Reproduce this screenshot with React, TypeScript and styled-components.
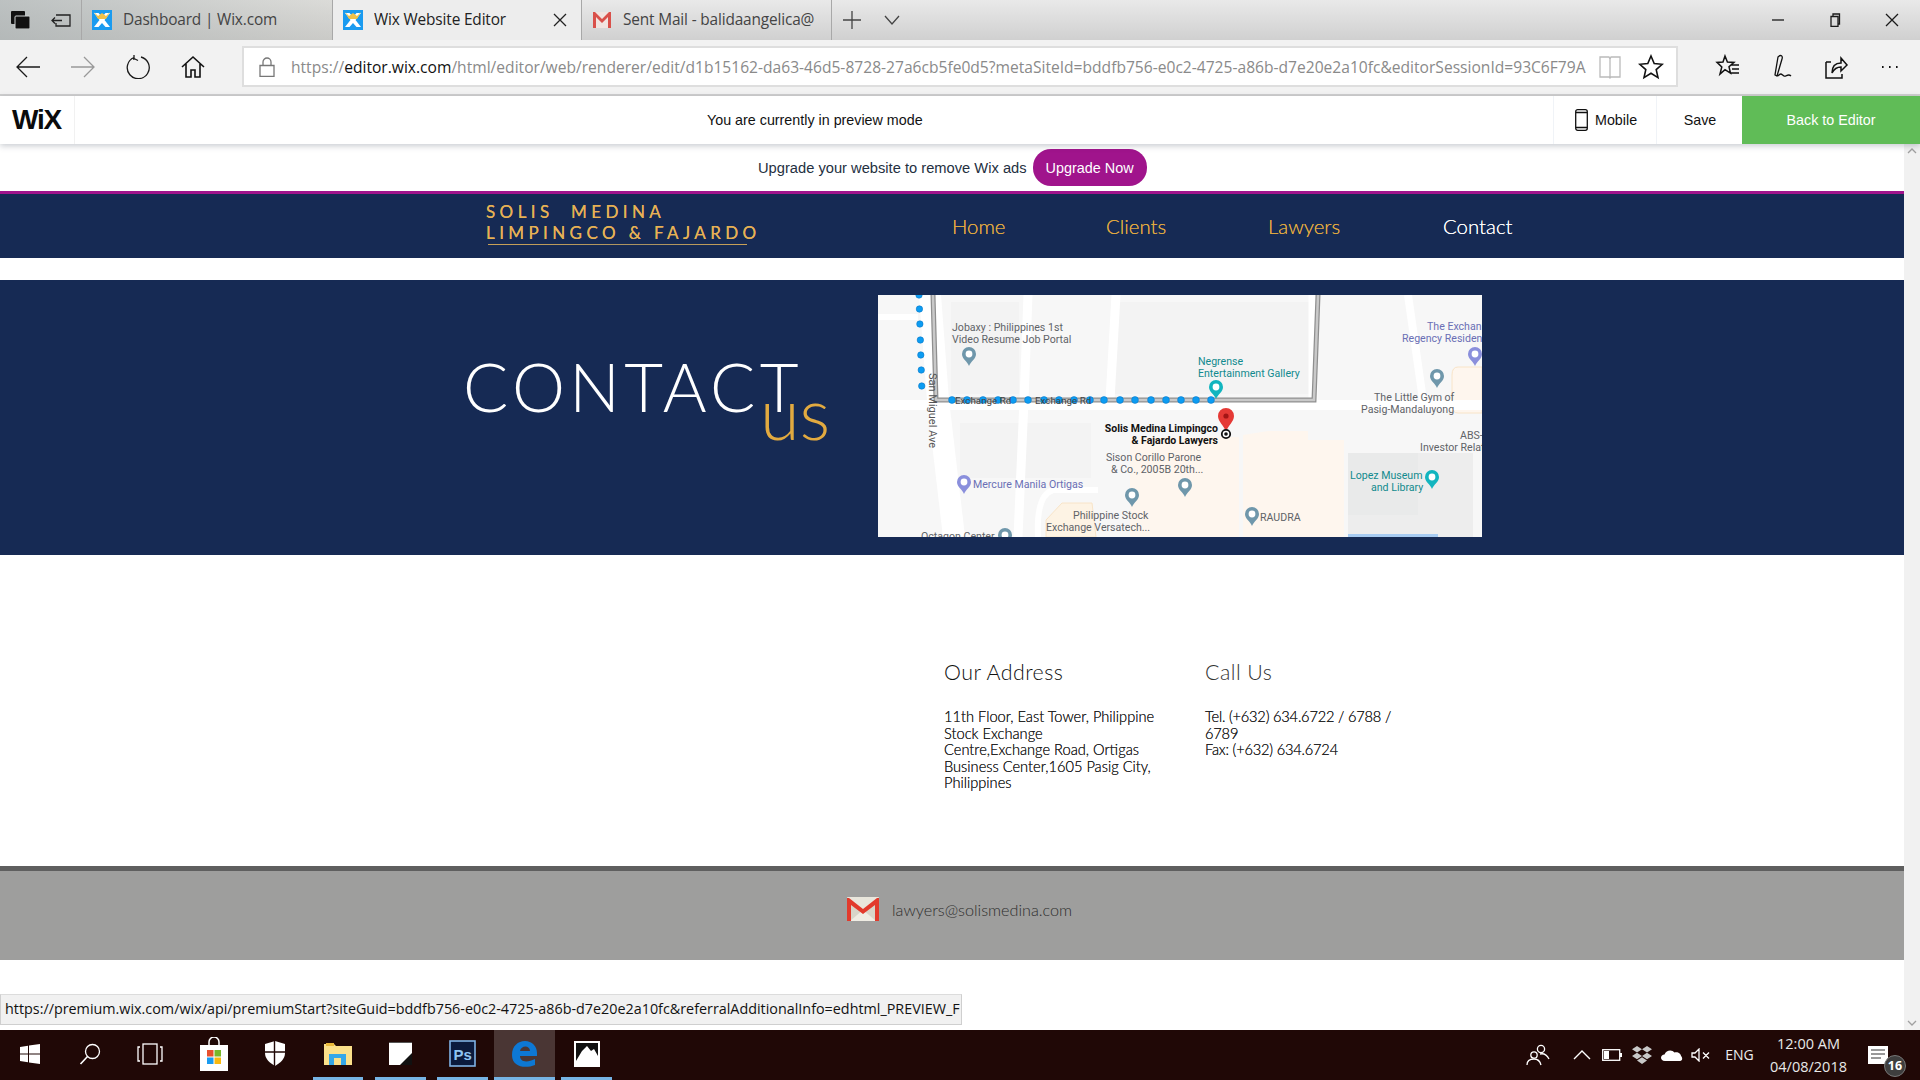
import React from "react";
import styled, { createGlobalStyle } from "styled-components";

const Global = createGlobalStyle`
  html, body { margin: 0; padding: 0; width: 1920px; height: 1080px; overflow: hidden; background: #fff; }
  * { box-sizing: border-box; }
  #root { width: 1920px; height: 1080px; }
`;

const UI = `"Open Sans", "Liberation Sans", sans-serif`;
const HELV = `"Liberation Sans", Arial, sans-serif`;
const DISPLAY = `Lato, "Open Sans", sans-serif`;
const NAVY = "#162a54";
const GOLD = "#e2aa40";
const PURPLE = "#a0148c";

const Screen = styled.div`
  width: 1920px; height: 1080px; display: flex; flex-direction: column; position: relative; overflow: hidden;
`;
const TabBar = styled.div`
  height: 40px; display: flex; flex: none;
  background: linear-gradient(90deg, rgba(165,172,172,.65) 0, rgba(190,190,180,.3) 340px, rgba(220,220,220,0) 560px),
    linear-gradient(180deg, #e9e9e9, #d0d0d0);
`;
const Cell = styled.div<{ $w: number }>`
  width: ${(p) => p.$w}px; flex: none; display: flex; align-items: center; justify-content: center;
`;
const Tab = styled.div<{ $w: number; $active?: boolean; $end?: boolean }>`
  width: ${(p) => p.$w}px; flex: none; display: flex; align-items: center; gap: 11px; padding-left: 10px; padding-bottom: 1px;
  font: 15.4px/20px ${UI}; letter-spacing: -0.15px; white-space: nowrap; overflow: hidden;
  color: ${(p) => (p.$active ? "#222" : "#444")};
  background: ${(p) => (p.$active ? "#ededed" : "transparent")};
  border-left: 1px solid #a8a8a8;
  border-right: ${(p) => (p.$end ? "1px solid #a8a8a8" : "0")};
`;
const TabLabel = styled.span`flex: 1; overflow: hidden;`;
const TabClose = styled.span`width: 42px; display: flex; justify-content: center; flex: none;`;
const Spacer = styled.div`flex: 1;`;

const Toolbar = styled.div`
  height: 56px; flex: none; display: flex; align-items: center; background: #f2f2f2; border-bottom: 2px solid #cfcfcf;
`;
const AddressBox = styled.div`
  width: 1436px; height: 41px; margin-left: 22px; flex: none; display: flex; align-items: center;
  background: #fff; border: 2px solid #dedede; margin-top: -1px;
`;
const LockCell = styled.div`width: 47px; flex: none; display: flex; justify-content: center; padding-right: 2px;`;
const Url = styled.div`
  width: 1299px; flex: none; font: 15.6px/20px ${UI}; color: #8a8a8a; white-space: nowrap; overflow: hidden; padding-top: 1px;
  b { font-weight: 400; color: #111; }
`;
const ToolSet = styled.div`display: flex; margin-left: 23px;`;

const WixBar = styled.div`
  height: 48px; flex: none; display: flex; align-items: center; background: #fff; position: relative; z-index: 2;
  box-shadow: 0 2px 6px rgba(40, 50, 70, 0.25); font: 14.3px/18px ${HELV}; color: #111;
`;
const WixLogoCell = styled.div`
  width: 75px; height: 100%; flex: none; border-right: 1px solid #f1f1f1; display: flex; align-items: center; padding-left: 12px;
  font: 700 28px/28px ${HELV}; letter-spacing: -1.2px; color: #0b0b0b;
`;
const PreviewNote = styled.div`margin-left: 632px; width: 846px;`;
const MobileBtn = styled.div`
  width: 104px; height: 100%; display: flex; align-items: center; gap: 7px; padding-left: 21px; border-left: 1px solid #f0f3f7; border-right: 1px solid #f0f3f7;
`;
const SaveBtn = styled.div`width: 85px; display: flex; justify-content: center; padding-left: 1px;`;
const BackBtn = styled.div`
  flex: 1; height: 100%; background: #60bc57; color: #fff; display: flex; align-items: center; justify-content: center;
`;

const BodyRow = styled.div`flex: 1; display: flex; min-height: 0;`;
const Page = styled.div`width: 1904px; flex: none; background: #fff; overflow: hidden;`;
const ScrollBar = styled.div`
  width: 16px; flex: none; background: #f1f1f1; color: #a0a0a0; display: flex; flex-direction: column; justify-content: space-between; align-items: center; padding: 4px 0;
`;

const UpgradeRow = styled.div`
  height: 47px; display: flex; align-items: center; padding-left: 758px; gap: 6px; font: 14.7px/18px ${HELV}; color: #24303f;
`;
const UpgradeBtn = styled.div`
  width: 114px; height: 37px; border-radius: 18px; background: ${PURPLE}; color: #fff; font-size: 14.4px;
  display: flex; align-items: center; justify-content: center;
`;
const NavBand = styled.div`
  height: 67px; border-top: 3px solid ${PURPLE}; background: ${NAVY}; display: flex; padding-left: 486px;
`;
const Logo = styled.div`
  width: 466px; flex: none; padding-top: 8px; font: 400 17px/20.5px ${DISPLAY}; color: #e6b154; letter-spacing: 4.4px; white-space: pre;
  text-shadow: 0 0 0.5px currentColor;
`;
const LogoRule = styled.div`
  width: 259px; height: 1px; margin: 1px 0 0 2px; background: linear-gradient(90deg, #c9a156, #a99262 60%, #c9a156);
`;
const NavList = styled.div`
  display: grid; grid-template-columns: 154px 162px 175px auto; align-items: center; height: 64px;
`;
const NavItem = styled.div<{ $on?: boolean }>`
  font: 300 20.4px/24px ${DISPLAY}; color: ${(p) => (p.$on ? "#fff" : GOLD)}; text-shadow: 0 0 0.5px currentColor;
`;
const WhiteGap = styled.div`height: 22px;`;
const Hero = styled.div`
  height: 275px; background: ${NAVY}; display: flex; padding-left: 463px;
`;
const TitleBox = styled.div`
  width: 415px; flex: none; display: flex; align-items: baseline; padding-top: 73px; height: 200px;
`;
const TitleMain = styled.div`
  font: 300 67px/66px ${DISPLAY}; color: #fff; letter-spacing: 4.4px;
`;
const TitleUs = styled.div`
  font: 300 72px/62px ${DISPLAY}; color: ${GOLD}; margin-left: -43px; position: relative; top: 28px;
`;
const MapFrame = styled.div`
  width: 604px; height: 242px; margin-top: 15px; flex: none; background: #f5f5f5;
  svg { display: block; }
`;
const Info = styled.div`
  height: 311px; padding: 105px 0 0 944px; display: flex;
`;
const InfoCol = styled.div<{ $w: number }>`width: ${(p) => p.$w}px; flex: none;`;
const InfoHead = styled.div<{ $soft?: boolean }>`
  font: 300 21.4px/24px ${DISPLAY}; color: ${(p) => (p.$soft ? "#333" : "#111")}; margin-bottom: 25px; letter-spacing: 0.45px; white-space: nowrap;
`;
const InfoBody = styled.div<{ $tight?: boolean }>`
  font: 300 14.65px/16.6px ${DISPLAY}; color: #222; white-space: nowrap; letter-spacing: ${(p) => (p.$tight ? "-0.2px" : "0")};
  text-shadow: 0 0 0.3px currentColor;
`;
const Footer = styled.div`
  height: 94px; border-top: 5px solid #5f5f5f; background: #9e9e9d; display: flex; align-items: flex-start; padding: 26px 0 0 847px; gap: 13px;
`;
const FooterMail = styled.div`font: 300 16.2px/26px ${DISPLAY}; color: #2e2e2e;`;

const StatusTip = styled.div`
  position: absolute; left: 0; top: 994px; width: 962px; height: 31px; background: #f1f1f1; border: 1px solid #cfcfcf; border-top: 1px solid #dcdcdc;
  font: 14.35px/27px ${UI}; color: #111; padding-left: 4px; white-space: nowrap; overflow: hidden;
`;

const Taskbar = styled.div`
  height: 50px; flex: none; background: #200806; display: flex; align-items: stretch; color: #eee; font: 14px/20px ${UI};
`;
const TaskCell = styled.div<{ $w: number; $on?: boolean; $bar?: boolean; $ml?: number }>`
  width: ${(p) => p.$w}px; flex: none; margin-left: ${(p) => p.$ml ?? 0}px; display: flex; align-items: center; justify-content: center;
  background: ${(p) => (p.$on ? "#4a3634" : "transparent")};
  border-bottom: ${(p) => (p.$bar ? "3px solid #76b4e4" : "3px solid transparent")};
`;
const TraySpacer = styled.div`flex: 1;`;
const Tray = styled.div<{ $w: number; $ml?: number }>`
  width: ${(p) => p.$w}px; flex: none; margin-left: ${(p) => p.$ml ?? 0}px; display: flex; align-items: center; justify-content: center;
`;
const Clock = styled.div`
  width: 92px; flex: none; margin-left: 3px; padding: 2px 7px 0 0; text-align: center; font: 14.5px/23px ${UI}; color: #e8e8e8; white-space: nowrap;
`;
const NotifBox = styled.div`
  width: 62px; flex: none; position: relative; display: flex; align-items: center; padding-left: 10px;
`;
const NotifBadge = styled.div`
  position: absolute; left: 26px; top: 25px; width: 22px; height: 22px; border-radius: 50%; background: #3e3e3e; border: 1px solid #777; color: #fff;
  font: 700 12.5px/20px ${UI}; text-align: center;
`;
const Ink = styled.span<{ $c: string }>`display: flex; color: ${(p) => p.$c};`;

const S = ({ w, h = w, vb, children }: { w: number; h?: number; vb: string; children: React.ReactNode }) => (
  <svg width={w} height={h} viewBox={vb} fill="none" stroke="currentColor" strokeWidth={1.3}>{children}</svg>
);

const WixFav = () => (
  <svg width="20" height="20" viewBox="0 0 20 20" style={{ flex: "none" }}>
    <rect width="20" height="20" fill="#1a9bf0" />
    <path d="M2 3 L6.500 3 L10 7 L13.500 3 L18 3 L12.500 10 L18 17 L13.500 17 L10 13 L6.500 17 L2 17 L7.500 10 Z" fill="#fff" />
    <path d="M2 2 L6 6 L10 3 L14 6 L18 2 L14 9 H6Z" fill="#f0c24a" />
  </svg>
);
const GmailFav = () => (
  <svg width="20" height="20" viewBox="0 0 20 20" style={{ flex: "none" }}>
    <rect x="1" y="2" width="18" height="16" fill="#f1e4e0" />
    <path d="M1 18V2h2l7 7 7-7h2v16h-3V7l-6 6-6-6v11z" fill="#d9504a" />
  </svg>
);

const pin = (x: number, y: number, c: string, key: string) => (
  <g key={key} transform={`translate(${x} ${y})`}>
    <path d="M0 11 C-2 6 -7 4 -7 -1 A7 7 0 0 1 7 -1 C7 4 2 6 0 11Z" fill={c} />
    <circle cx="0" cy="-1" r="3.4" fill="#fff" />
  </g>
);

const hDots = [74, 89, 105, 120, 135, 150, 166, 181, 196, 212, 226, 242, 257, 273, 288, 303, 318, 333];
const vDots = [0, 14, 29, 45, 60, 75, 91];

const GRAY = "#5f6368";
const TEAL = "#118a8e";
const IND = "#6a6fb5";

const MapArt = () => (
  <svg width="604" height="242" viewBox="0 0 604 242" fontFamily="Roboto, sans-serif" fontSize="10.6">
    <rect width="604" height="242" fill="#f7f7f7" />
    <rect x="73" y="7" width="68" height="92" fill="#f3f3f3" />
    <rect x="234" y="7" width="198" height="92" fill="#f3f3f3" />
    <rect x="82" y="128" width="131" height="55" fill="#f3f3f3" />
    <rect x="470" y="158" width="125" height="84" fill="#ededed" />
    <rect x="470" y="158" width="70" height="62" fill="#e9eaea" />
    <path d="M252 142H361V242H252Z" fill="#fef6ee" />
    <path d="M365 140L390 136H430V145H466V242H365Z" fill="#fef6ee" />
    <path d="M168 225L184 208H214L218 242H168Z" fill="#fdf3e4" stroke="#f8e4c8" />
    <path d="M580 72 H604 V118 H580 Q574 118 574 110 V80 Q574 72 580 72Z" fill="#fef6ee" stroke="#f8e4c8" />
    <rect x="470" y="239" width="90" height="3" fill="#a8ccf2" />
    <g stroke="#fff" fill="none">
      <path d="M52 0 L60 105 L76 242" strokeWidth="22" />
      <path d="M0 110 H604" strokeWidth="10" />
      <path d="M150 0 L146 105 L140 242" strokeWidth="9" />
      <path d="M238 0 L232 105" strokeWidth="9" />
      <path d="M435 0 V105" strokeWidth="9" />
      <path d="M530 0 L545 105" strokeWidth="8" />
      <path d="M0 22 H40" strokeWidth="6" />
      <path d="M160 242 Q158 200 175 195 H220" strokeWidth="6" />
    </g>
    <path d="M55 0 L58 105 H436 L440 0" fill="none" stroke="#8f8f8f" strokeWidth="5" />
    <path d="M55 0 L58 105 H436 L440 0" fill="none" stroke="#c9c9c9" strokeWidth="2.5" />
    {hDots.map((x) => <circle key={x} cx={x} cy="105" r="3.4" fill="#0c9cf2" stroke="#0a78c8" strokeWidth="0.6" />)}
    {vDots.map((y) => <circle key={y} cx={41 + y * 0.03} cy={y} r="3.2" fill="#0c9cf2" stroke="#0a78c8" strokeWidth="0.6" />)}
    <text x="77" y="108.500" fill="#444" fontSize="9.8">Exchange Rd</text>
    <text x="157" y="108.500" fill="#444" fontSize="9.8">Exchange Rd</text>
    <text transform="translate(51 78) rotate(90)" fill="#555" fontSize="11">San Miguel Ave</text>
    <text x="74" y="36" fill={GRAY}>Jobaxy : Philippines 1st</text>
    <text x="74" y="48" fill={GRAY}>Video Resume Job Portal</text>
    <text x="320" y="70" fill={TEAL}>Negrense</text>
    <text x="320" y="82" fill={TEAL}>Entertainment Gallery</text>
    <text x="549" y="35" fill={IND}>The Exchan</text>
    <text x="524" y="47" fill={IND}>Regency Residen</text>
    <text x="496" y="106" fill={GRAY}>The Little Gym of</text>
    <text x="483" y="118" fill={GRAY}>Pasig-Mandaluyong</text>
    <text x="340" y="137" textAnchor="end" fill="#111" fontWeight="700" fontSize="10.500">Solis Medina Limpingco</text>
    <text x="340" y="149" textAnchor="end" fill="#111" fontWeight="700" fontSize="10.500">&amp; Fajardo Lawyers</text>
    <text x="582" y="144" fill={GRAY}>ABS-</text>
    <text x="542" y="156" fill={GRAY}>Investor Relat</text>
    <text x="228" y="166" fill={GRAY}>Sison Corillo Parone</text>
    <text x="233" y="178" fill={GRAY}>&amp; Co., 2005B 20th...</text>
    <text x="95" y="193" fill={IND}>Mercure Manila Ortigas</text>
    <text x="472" y="184" fill={TEAL}>Lopez Museum</text>
    <text x="493" y="196" fill={TEAL}>and Library</text>
    <text x="195" y="224" fill={GRAY}>Philippine Stock</text>
    <text x="168" y="236" fill={GRAY}>Exchange Versatech...</text>
    <text x="382" y="226" fill={GRAY}>RAUDRA</text>
    <text x="43" y="245" fill={GRAY}>Octagon Center</text>
    {pin(91, 60, "#6f97ab", "a")}
    {pin(338, 93, "#12b5bf", "b")}
    {pin(597, 60, "#8a8fdc", "c")}
    {pin(559, 82, "#6f97ab", "d")}
    {pin(307, 191, "#6f97ab", "e")}
    {pin(254, 201, "#6f97ab", "f")}
    {pin(374, 220, "#6f97ab", "g")}
    {pin(86, 188, "#8a8fdc", "h")}
    {pin(554, 183, "#12b5bf", "i")}
    {pin(127, 241, "#6f97ab", "j")}
    <path d="M348 137 C346 130 340 127 340 121 A8 8 0 0 1 356 121 C356 127 350 130 348 137Z" fill="#e53935" />
    <circle cx="348" cy="121" r="2.6" fill="#a31515" />
    <circle cx="348" cy="139" r="4.2" fill="#fff" stroke="#111" strokeWidth="1.8" />
    <circle cx="348" cy="139" r="1.8" fill="#111" />
  </svg>
);

export default function App() {
  return (
    <Screen>
      <Global />
      <TabBar>
        <Cell $w={41}>
          <svg width="19" height="18" viewBox="0 0 19 18"><rect x="0" y="0" width="14" height="13" rx="1" fill="#111" /><rect x="4" y="5" width="15" height="13" rx="1" fill="#111" stroke="#d0d4d4" strokeWidth="1" /></svg>
        </Cell>
        <Cell $w={40}>
          <Ink $c="#222"><S w={20} h={13} vb="0 0 20 13"><path d="M5 1h14v11H5V9M1 6.500h10M4 3.500l-3 3 3 3" /></S></Ink>
        </Cell>
        <Tab $w={251}><WixFav /><TabLabel>Dashboard | Wix.com</TabLabel></Tab>
        <Tab $w={249} $active>
          <WixFav /><TabLabel>Wix Website Editor</TabLabel>
          <TabClose><S w={16} vb="0 0 16 16"><path d="M2 2l12 12M14 2L2 14" /></S></TabClose>
        </Tab>
        <Tab $w={251} $end><GmailFav /><TabLabel>Sent Mail - balidaangelica@</TabLabel></Tab>
        <Cell $w={40}><Ink $c="#444"><S w={18} vb="0 0 18 18"><path d="M9 0v18M0 9h18" /></S></Ink></Cell>
        <Cell $w={40}><Ink $c="#444"><S w={16} vb="0 0 16 16"><path d="M1 4l7 8 7-8" /></S></Ink></Cell>
        <Spacer />
        <Cell $w={57}><Ink $c="#1a1a1a"><S w={12} vb="0 0 12 12"><path d="M0 6h12" /></S></Ink></Cell>
        <Cell $w={57}><Ink $c="#1a1a1a"><S w={14} vb="0 0 14 14"><path d="M3 3.500h7v10H3zM5 3.500V1h6.500v10H10" /></S></Ink></Cell>
        <Cell $w={57}><Ink $c="#1a1a1a"><S w={14} vb="0 0 14 14"><path d="M1 1l12 12M13 1L1 13" /></S></Ink></Cell>
      </TabBar>

      <Toolbar>
        <Cell $w={55}><Ink $c="#1a1a1a"><S w={24} vb="0 0 24 24"><path d="M1 12h23M11 2L1 12l10 10" /></S></Ink></Cell>
        <Cell $w={55}><Ink $c="#999"><S w={24} vb="0 0 24 24"><path d="M0 12h23M13 2l10 10-10 10" /></S></Ink></Cell>
        <Cell $w={55}><Ink $c="#1a1a1a"><S w={24} vb="0 0 24 24"><path d="M15 2A11 11 0 1 1 8 2.500M8 0v4h-1M8 3.500l4 2" /></S></Ink></Cell>
        <Cell $w={55}><Ink $c="#111"><S w={24} vb="0 0 24 24"><path d="M1 12L12 2l11 10M5 9V22h5v-7h4v7h5V9" strokeWidth="1.6" /></S></Ink></Cell>
        <AddressBox>
          <LockCell><Ink $c="#777"><S w={16} h={20} vb="0 0 16 20"><path d="M1 8.500h14v11H1zM4 8.500V5a4 4 0 0 1 8 0v3.500" /></S></Ink></LockCell>
          <Url>https://<b>editor.wix.com</b>/html/editor/web/renderer/edit/d1b15162-da63-46d5-8728-27a6cb5fe0d5?metaSiteId=bddfb756-e0c2-4725-a86b-d7e20e2a10fc&amp;editorSessionId=93C6F79A</Url>
          <Cell $w={40}><Ink $c="#bbb"><S w={26} vb="0 0 26 26"><path d="M3 3h9l1 2 1-2h9v20H14l-1 1-1-1H3zM13 5v18" /></S></Ink></Cell>
          <Cell $w={42}><Ink $c="#111"><S w={26} vb="0 0 26 26"><path d="M13 2l3.200 7.600 8 .7-6 5.300 1.800 8L13 19.300l-7 4.300 1.800-8-6-5.300 8-.7z" strokeWidth="1.6" /></S></Ink></Cell>
        </AddressBox>
        <ToolSet>
          <Cell $w={54}><Ink $c="#111"><S w={26} vb="0 0 26 26"><path d="M10 2l2.400 6 6.600.4-5 4.400 1.500 6.400L10 15.600l-5 4.400 1.800-7L2 8.400l6-.4zM16 11h8M17 15h7M16 19h8" strokeWidth="1.5" /></S></Ink></Cell>
          <Cell $w={54}><Ink $c="#111"><S w={26} vb="0 0 26 26"><path d="M9 3c3-3 5-1 4 2L8 22l-2-1zM9 22c3-4 4-1 6 0s4-3 7 0" /></S></Ink></Cell>
          <Cell $w={54}><Ink $c="#111"><S w={26} vb="0 0 26 26"><path d="M3 8v16h16v-4M3 8h5M9 19c0-7 3-10 9-10V4l6 7-6 6v-4c-4 0-7 2-9 6z" strokeWidth="1.5" /></S></Ink></Cell>
          <Cell $w={54}><Ink $c="#111"><S w={22} h={6} vb="0 0 22 6"><path d="M3 3h1.600M10 3h1.600M17 3h1.600" strokeWidth="2.200" /></S></Ink></Cell>
        </ToolSet>
      </Toolbar>

      <WixBar>
        <WixLogoCell>WiX</WixLogoCell>
        <PreviewNote>You are currently in preview mode</PreviewNote>
        <MobileBtn>
          <S w={13} h={22} vb="0 0 13 22"><rect x="0.700" y="0.700" width="11.600" height="20.600" rx="2" /><path d="M1 3.500h11M1 18.500h11" /></S>
          Mobile
        </MobileBtn>
        <SaveBtn>Save</SaveBtn>
        <BackBtn>Back to Editor</BackBtn>
      </WixBar>

      <BodyRow>
        <Page>
          <UpgradeRow>
            Upgrade your website to remove Wix ads
            <UpgradeBtn>Upgrade Now</UpgradeBtn>
          </UpgradeRow>
          <NavBand>
            <Logo>
              {"SOLIS  MEDINA\nLIMPINGCO & FAJARDO"}
              <LogoRule />
            </Logo>
            <NavList>
              <NavItem>Home</NavItem>
              <NavItem>Clients</NavItem>
              <NavItem>Lawyers</NavItem>
              <NavItem $on>Contact</NavItem>
            </NavList>
          </NavBand>
          <WhiteGap />
          <Hero>
            <TitleBox>
              <TitleMain>CONTACT</TitleMain>
              <TitleUs>us</TitleUs>
            </TitleBox>
            <MapFrame><MapArt /></MapFrame>
          </Hero>
          <Info>
            <InfoCol $w={261}>
              <InfoHead>Our Address</InfoHead>
              <InfoBody>
                11th Floor, East Tower, Philippine<br />
                Stock Exchange<br />
                Centre,Exchange Road, Ortigas<br />
                Business Center,1605 Pasig City,<br />
                Philippines
              </InfoBody>
            </InfoCol>
            <InfoCol $w={200}>
              <InfoHead $soft>Call Us</InfoHead>
              <InfoBody $tight>
                Tel. (+632) 634.6722 / 6788 /<br />
                6789<br />
                Fax: (+632) 634.6724
              </InfoBody>
            </InfoCol>
          </Info>
          <Footer>
            <svg width="32" height="24" viewBox="0 0 32 24">
              <rect width="32" height="24" rx="1" fill="#e9e6dc" />
              <path d="M0 24V3l16 12L32 3v21z" fill="#d8d5c9" />
              <path d="M3 24L16 13l13 11z" fill="#efece3" />
              <path d="M0 24V1h2l14 11L30 1h2v23h-4V8L16 17 4 8v16z" fill="#e23a2c" />
            </svg>
            <FooterMail>lawyers@solismedina.com</FooterMail>
          </Footer>
        </Page>
        <ScrollBar>
          <S w={10} h={6} vb="0 0 10 6"><path d="M1 5l4-4 4 4" /></S>
          <S w={10} h={6} vb="0 0 10 6"><path d="M1 1l4 4 4-4" /></S>
        </ScrollBar>
      </BodyRow>

      <Taskbar>
        <TaskCell $w={60}>
          <svg width="20" height="20" viewBox="0 0 20 20" fill="#fff"><path d="M0 3l8-1.200V9.500H0zM9 1.600L20 0v9.500H9zM0 10.500h8v7.700L0 17zM9 10.500h11V20L9 18.400z" /></svg>
        </TaskCell>
        <TaskCell $w={60}><Ink $c="#fff"><S w={22} vb="0 0 22 22"><circle cx="13.500" cy="8.500" r="7" /><path d="M8.500 13.500L1.500 21" strokeWidth="1.600" /></S></Ink></TaskCell>
        <TaskCell $w={60}><Ink $c="#fff"><S w={26} h={22} vb="0 0 26 22"><rect x="6" y="1" width="14" height="20" /><path d="M3 4H1v14h2M23 4h2v14h-2" /></S></Ink></TaskCell>
        <TaskCell $w={68}>
          <svg width="30" height="34" viewBox="0 0 30 34">
            <path d="M10 8V5a5 5 0 0 1 10 0v3" fill="none" stroke="#fff" strokeWidth="1.500" />
            <rect x="1" y="8" width="28" height="26" fill="#fff" />
            <rect x="8" y="13" width="6.500" height="6.500" fill="#e8502d" /><rect x="15.500" y="13" width="6.500" height="6.500" fill="#78b82a" />
            <rect x="8" y="20.500" width="6.500" height="6.500" fill="#1a9bf0" /><rect x="15.500" y="20.500" width="6.500" height="6.500" fill="#f9b80f" />
          </svg>
        </TaskCell>
        <TaskCell $w={54}>
          <svg width="20" height="25" viewBox="0 0 20 25"><path d="M10 0l10 3v9c0 6-5 10-10 13C5 22 0 18 0 12V3z" fill="#fff" /><path d="M9.500 0v25M0 11h20" stroke="#200806" strokeWidth="1.400" /></svg>
        </TaskCell>
        <TaskCell $w={50} $ml={11} $bar>
          <svg width="28" height="23" viewBox="0 0 28 23"><path d="M0 2h10l2 2h16v19H0z" fill="#fbe08a" /><rect x="2" y="1" width="8" height="3" fill="#e9b93b" /><path d="M5 23V12h17v11h-5v-7h-7v7z" fill="#35a7e8" /></svg>
        </TaskCell>
        <TaskCell $w={51} $ml={12} $bar>
          <svg width="23" height="23" viewBox="0 0 23 23"><rect width="23" height="23" fill="#fff" /><path d="M23 11L11 23h12z" fill="#111" /><path d="M0 0h23v1H0z" fill="#555" /></svg>
        </TaskCell>
        <TaskCell $w={51} $ml={11} $bar>
          <svg width="27" height="27" viewBox="0 0 27 27"><rect x="1" y="1" width="25" height="25" fill="#0b1a3d" stroke="#7fb2e5" strokeWidth="1.600" /><text x="4.500" y="19.500" fill="#8fc4f2" fontFamily={HELV} fontWeight="700" fontSize="15">Ps</text></svg>
        </TaskCell>
        <TaskCell $w={61} $ml={6} $on $bar>
          <svg width="25" height="26" viewBox="0 0 25 26"><path d="M0 14C0 5 6 0 13 0c7 0 12 5 12 12v3H8c0 6 7 7 15 3v6c-10 4-23 2-23-10zM8 10h10c0-6-9-6-10 0z" fill="#0d78d4" /></svg>
        </TaskCell>
        <TaskCell $w={51} $ml={6} $bar>
          <svg width="26" height="26" viewBox="0 0 26 26"><rect width="26" height="26" fill="#fff" /><rect x="2" y="2" width="22" height="18" fill="#111" /><path d="M2 20l6-10 5-5 4 5 3-2 4 7v5z" fill="#fff" /></svg>
        </TaskCell>
        <TraySpacer />
        <Tray $w={34}><Ink $c="#fff"><S w={24} h={22} vb="0 0 24 22"><circle cx="15" cy="5" r="3.600" /><circle cx="8" cy="11" r="3.200" /><path d="M1 21c0-4 3-6 7-6s6 2 7 6M14 10c4-1 7 1 9 5" /></S></Ink></Tray>
        <Tray $w={30} $ml={12}><Ink $c="#fff"><S w={18} h={10} vb="0 0 18 10"><path d="M1 9l8-8 8 8" strokeWidth="1.400" /></S></Ink></Tray>
        <Tray $w={30}><Ink $c="#fff"><S w={20} h={12} vb="0 0 20 12"><rect x="0.700" y="0.700" width="17" height="10.600" /><rect x="2" y="2" width="5" height="8" fill="#fff" stroke="none" /><rect x="18" y="4" width="2" height="4" fill="#fff" stroke="none" /></S></Ink></Tray>
        <Tray $w={30}>
          <svg width="20" height="18" viewBox="0 0 20 18" fill="#c8c8c8"><path d="M5 0l5 3.200L5 6.500 0 3.200zM15 0l5 3.200-5 3.300-5-3.300zM5 6.800l5 3.300-5 3.200-5-3.200zM15 6.800l5 3.300-5 3.200-5-3.200zM5 14.400l5-3.200 5 3.200L10 18z" /></svg>
        </Tray>
        <Tray $w={30}>
          <svg width="22" height="14" viewBox="0 0 22 14" fill="#fff"><path d="M4 13C1 13 0 11 0 9.500S1.500 6.500 3.500 6.500C5 2 11 1 13.500 4.500 17 3.500 20 6 20 8c1.500 1 2 5-1 5z" /></svg>
        </Tray>
        <Tray $w={28}><Ink $c="#fff"><S w={20} h={14} vb="0 0 20 14"><path d="M1 5h3l4-4v12L4 9H1zM12 4.500l6 6M18 4.500l-6 6" /></S></Ink></Tray>
        <Tray $w={47} $ml={1}>ENG</Tray>
        <Clock>12:00 AM<br />04/08/2018</Clock>
        <NotifBox>
          <svg width="20" height="18" viewBox="0 0 20 18"><rect width="20" height="18" fill="#fff" /><path d="M3 4h14M3 8h14M3 12h10" stroke="#333" /></svg>
          <NotifBadge>16</NotifBadge>
        </NotifBox>
      </Taskbar>

      <StatusTip>https://premium.wix.com/wix/api/premiumStart?siteGuid=bddfb756-e0c2-4725-a86b-d7e20e2a10fc&amp;referralAdditionalInfo=edhtml_PREVIEW_F</StatusTip>
    </Screen>
  );
}
